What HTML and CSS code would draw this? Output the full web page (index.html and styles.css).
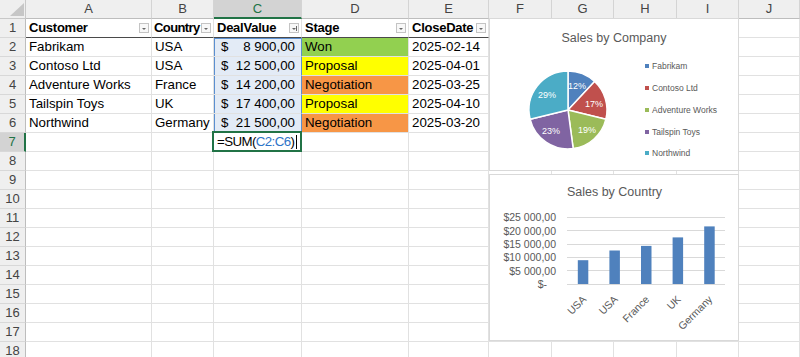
FILE: index.html
```html
<!DOCTYPE html>
<html>
<head>
<meta charset="utf-8">
<link rel="stylesheet" href="styles.css">
</head>
<body>
<div class="sheet">
  <div class="corner"><svg width="26" height="19" viewBox="0 0 26 19"><polygon points="10,16 24,16 24,3" fill="#c6c6c6"/></svg></div>
  <div class="ch">A</div><div class="ch">B</div><div class="ch sel-col">C</div><div class="ch">D</div><div class="ch">E</div><div class="ch">F</div><div class="ch">G</div><div class="ch">H</div><div class="ch">I</div><div class="ch">J</div>

  <div class="rh">1</div>
  <div class="c th"><span class="tt">Customer</span><span class="fb"></span></div>
  <div class="c th"><span class="tt tight">Country</span><span class="fb"></span></div>
  <div class="c th"><span class="tt">DealValue</span><span class="fb fb-sort"></span></div>
  <div class="c th"><span class="tt">Stage</span><span class="fb"></span></div>
  <div class="c th"><span class="tt">CloseDate</span><span class="fb"></span></div>
  <div class="c"></div><div class="c"></div><div class="c"></div><div class="c"></div><div class="c"></div>

  <div class="rh">2</div>
  <div class="c">Fabrikam</div><div class="c">USA</div>
  <div class="c num rng rng-top"><span>$</span><span>8 900,00</span></div>
  <div class="c won">Won</div><div class="c">2025-02-14</div>
  <div class="c"></div><div class="c"></div><div class="c"></div><div class="c"></div><div class="c"></div>

  <div class="rh">3</div>
  <div class="c">Contoso Ltd</div><div class="c">USA</div>
  <div class="c num rng"><span>$</span><span>12 500,00</span></div>
  <div class="c prop">Proposal</div><div class="c">2025-04-01</div>
  <div class="c"></div><div class="c"></div><div class="c"></div><div class="c"></div><div class="c"></div>

  <div class="rh">4</div>
  <div class="c">Adventure Works</div><div class="c">France</div>
  <div class="c num rng"><span>$</span><span>14 200,00</span></div>
  <div class="c neg">Negotiation</div><div class="c">2025-03-25</div>
  <div class="c"></div><div class="c"></div><div class="c"></div><div class="c"></div><div class="c"></div>

  <div class="rh">5</div>
  <div class="c">Tailspin Toys</div><div class="c">UK</div>
  <div class="c num rng"><span>$</span><span>17 400,00</span></div>
  <div class="c prop">Proposal</div><div class="c">2025-04-10</div>
  <div class="c"></div><div class="c"></div><div class="c"></div><div class="c"></div><div class="c"></div>

  <div class="rh">6</div>
  <div class="c">Northwind</div><div class="c">Germany</div>
  <div class="c num rng rng-bot"><span>$</span><span>21 500,00</span></div>
  <div class="c neg">Negotiation</div><div class="c">2025-03-20</div>
  <div class="c"></div><div class="c"></div><div class="c"></div><div class="c"></div><div class="c"></div>

  <div class="rh sel-row">7</div>
  <div class="c"></div><div class="c"></div>
  <div class="c active"><span class="fx">=SUM(<span class="ref">C2:C6</span>)</span><span class="caret"></span></div>
  <div class="c"></div><div class="c"></div>
  <div class="c"></div><div class="c"></div><div class="c"></div><div class="c"></div><div class="c"></div>

  <div class="rh">8</div><div class="c"></div><div class="c"></div><div class="c"></div><div class="c"></div><div class="c"></div><div class="c"></div><div class="c"></div><div class="c"></div><div class="c"></div><div class="c"></div>
  <div class="rh">9</div><div class="c"></div><div class="c"></div><div class="c"></div><div class="c"></div><div class="c"></div><div class="c"></div><div class="c"></div><div class="c"></div><div class="c"></div><div class="c"></div>
  <div class="rh">10</div><div class="c"></div><div class="c"></div><div class="c"></div><div class="c"></div><div class="c"></div><div class="c"></div><div class="c"></div><div class="c"></div><div class="c"></div><div class="c"></div>
  <div class="rh">11</div><div class="c"></div><div class="c"></div><div class="c"></div><div class="c"></div><div class="c"></div><div class="c"></div><div class="c"></div><div class="c"></div><div class="c"></div><div class="c"></div>
  <div class="rh">12</div><div class="c"></div><div class="c"></div><div class="c"></div><div class="c"></div><div class="c"></div><div class="c"></div><div class="c"></div><div class="c"></div><div class="c"></div><div class="c"></div>
  <div class="rh">13</div><div class="c"></div><div class="c"></div><div class="c"></div><div class="c"></div><div class="c"></div><div class="c"></div><div class="c"></div><div class="c"></div><div class="c"></div><div class="c"></div>
  <div class="rh">14</div><div class="c"></div><div class="c"></div><div class="c"></div><div class="c"></div><div class="c"></div><div class="c"></div><div class="c"></div><div class="c"></div><div class="c"></div><div class="c"></div>
  <div class="rh">15</div><div class="c"></div><div class="c"></div><div class="c"></div><div class="c"></div><div class="c"></div><div class="c"></div><div class="c"></div><div class="c"></div><div class="c"></div><div class="c"></div>
  <div class="rh">16</div><div class="c"></div><div class="c"></div><div class="c"></div><div class="c"></div><div class="c"></div><div class="c"></div><div class="c"></div><div class="c"></div><div class="c"></div><div class="c"></div>
  <div class="rh">17</div><div class="c"></div><div class="c"></div><div class="c"></div><div class="c"></div><div class="c"></div><div class="c"></div><div class="c"></div><div class="c"></div><div class="c"></div><div class="c"></div>
  <div class="rh">18</div><div class="c"></div><div class="c"></div><div class="c"></div><div class="c"></div><div class="c"></div><div class="c"></div><div class="c"></div><div class="c"></div><div class="c"></div><div class="c"></div>

  <div class="chart chart-pie">
    <svg width="250" height="153" viewBox="489 18 250 153">
      <rect x="489.5" y="18.5" width="249" height="152" fill="#fff" stroke="#d9d9d9"/>
      <text class="ctitle" x="614" y="42" text-anchor="middle">Sales by Company</text>
      <g stroke="#fff" stroke-width="1.5" stroke-linejoin="round">
        <path d="M568,110 L568,71 A39,39 0 0,1 594.6,81.5 Z" fill="#4f81bd"/>
        <path d="M568,110 L594.6,81.5 A39,39 0 0,1 605.9,119.2 Z" fill="#c0504d"/>
        <path d="M568,110 L605.9,119.2 A39,39 0 0,1 573.2,148.6 Z" fill="#9bbb59"/>
        <path d="M568,110 L573.2,148.6 A39,39 0 0,1 530.1,119.2 Z" fill="#8064a2"/>
        <path d="M568,110 L530.1,119.2 A39,39 0 0,1 568,71 Z" fill="#4bacc6"/>
      </g>
      <g class="plabel" text-anchor="middle">
        <text x="577" y="88.5">12%</text>
        <text x="594" y="106.5">17%</text>
        <text x="587" y="132.5">19%</text>
        <text x="551" y="133.5">23%</text>
        <text x="547" y="97.5">29%</text>
      </g>
      <g class="legend">
        <rect x="645" y="64" width="4" height="4" fill="#4f81bd"/><text x="652" y="69">Fabrikam</text>
        <rect x="645" y="86" width="4" height="4" fill="#c0504d"/><text x="652" y="91">Contoso Ltd</text>
        <rect x="645" y="108" width="4" height="4" fill="#9bbb59"/><text x="652" y="113">Adventure Works</text>
        <rect x="645" y="130" width="4" height="4" fill="#8064a2"/><text x="652" y="135">Tailspin Toys</text>
        <rect x="645" y="151" width="4" height="4" fill="#4bacc6"/><text x="652" y="156">Northwind</text>
      </g>
    </svg>
  </div>

  <div class="chart chart-bar">
    <svg width="250" height="167" viewBox="489 174 250 167">
      <rect x="489.5" y="174.5" width="249" height="166" fill="#fff" stroke="#d9d9d9"/>
      <text class="ctitle" x="614.5" y="196" text-anchor="middle">Sales by Country</text>
      <g stroke="#d9d9d9" stroke-width="1">
        <line x1="567" y1="217.5" x2="725" y2="217.5"/>
        <line x1="567" y1="230.5" x2="725" y2="230.5"/>
        <line x1="567" y1="244.5" x2="725" y2="244.5"/>
        <line x1="567" y1="257.5" x2="725" y2="257.5"/>
        <line x1="567" y1="270.5" x2="725" y2="270.5"/>
        <line x1="567" y1="284.5" x2="725" y2="284.5"/>
      </g>
      <g class="axis" text-anchor="end">
        <text x="556" y="221">$25 000,00</text>
        <text x="556" y="234.5">$20 000,00</text>
        <text x="556" y="248">$15 000,00</text>
        <text x="556" y="261">$10 000,00</text>
        <text x="556" y="274.5">$5 000,00</text>
        <text x="547" y="288">$-</text>
      </g>
      <g fill="#4f81bd">
        <rect x="577.8" y="260.2" width="10.5" height="23.8"/>
        <rect x="609.4" y="250.5" width="10.5" height="33.5"/>
        <rect x="641" y="245.9" width="10.5" height="38.1"/>
        <rect x="672.6" y="237.4" width="10.5" height="46.6"/>
        <rect x="704.2" y="226.4" width="10.5" height="57.6"/>
      </g>
      <g class="axis" text-anchor="end">
        <text x="587" y="300" transform="rotate(-45 587 300)">USA</text>
        <text x="618.5" y="300" transform="rotate(-45 618.5 300)">USA</text>
        <text x="650" y="300" transform="rotate(-45 650 300)">France</text>
        <text x="681.5" y="300" transform="rotate(-45 681.5 300)">UK</text>
        <text x="713" y="300" transform="rotate(-45 713 300)">Germany</text>
      </g>
    </svg>
  </div>
</div>
</body>
</html>
```

FILE: styles.css
```css
html, body {
  margin: 0;
  padding: 0;
  background: #fff;
  overflow: hidden;
}

.sheet {
  position: relative;
  display: grid;
  grid-template-columns: 26px 126px 62px 88px 107px 80px 63px 62px 63px 62px 61px;
  grid-auto-rows: 19px;
  width: 800px;
  height: 357px;
  overflow: hidden;
  font-family: "Liberation Sans", Arial, sans-serif;
  font-size: 13.3px;
  color: #000;
}

.corner {
  background: #efefef;
  border-right: 1px solid #c8c8c8;
  border-bottom: 1px solid #c8c8c8;
  box-sizing: border-box;
}
.corner svg { display: block; }

.ch {
  box-sizing: border-box;
  background: #efefef;
  border-right: 1px solid #d4d4d4;
  border-bottom: 1px solid #bdbdbd;
  color: #444;
  font-size: 13px;
  text-align: center;
  line-height: 18px;
}
.ch.sel-col {
  background: #d3d3d3;
  color: #217346;
  border-bottom: 2px solid #217346;
  line-height: 17px;
}

.rh {
  box-sizing: border-box;
  background: #efefef;
  border-right: 1px solid #bdbdbd;
  border-bottom: 1px solid #d8d8d8;
  color: #444;
  font-size: 13px;
  text-align: center;
  line-height: 18px;
}
.rh.sel-row {
  background: #d3d3d3;
  color: #217346;
  border-right: 2px solid #217346;
}

.c {
  box-sizing: border-box;
  border-right: 1px solid #e1e1e1;
  border-bottom: 1px solid #e1e1e1;
  line-height: 18px;
  padding: 0 3px;
  white-space: nowrap;
  overflow: hidden;
}

.th {
  display: flex;
  align-items: center;
  justify-content: space-between;
  font-weight: bold;
  font-size: 13px;
  letter-spacing: -0.25px;
  padding: 0 2px 0 3px;
  border-bottom: 1px solid #4a4a4a;
}
.tt {
  overflow: visible;
  min-width: 0;
}
.tt.tight {
  letter-spacing: -0.6px;
  margin-left: -1px;
}
.fb {
  flex: none;
  position: relative;
  width: 10px;
  height: 10px;
  box-sizing: border-box;
  border: 1px solid #c4c4c4;
  background: #f8f8f8;
  margin-left: 1px;
}
.fb::after {
  content: "";
  position: absolute;
  left: 2px;
  top: 4px;
  border-left: 2px solid transparent;
  border-right: 2px solid transparent;
  border-top: 2px solid #666;
}
.fb-sort::before {
  content: "";
  position: absolute;
  right: 1px;
  top: 2px;
  width: 1px;
  height: 5px;
  background: #666;
}

.num {
  display: flex;
  justify-content: space-between;
  padding: 0 6px 0 7px;
}
.rng {
  background: #e3ebf6;
  box-shadow: inset 1px 0 0 #5b8fd0;
  border-right-color: #5b8fd0;
}
.rng-top { box-shadow: inset 1px 0 0 #5b8fd0, inset 0 1px 0 #5b8fd0; }
.rng-bot { border-bottom-color: #5b8fd0; }

.won { background: #92d050; }
.prop { background: #ffff00; }
.neg { background: #f79646; }

.active {
  position: relative;
  overflow: visible;
  display: flex;
  align-items: center;
  padding-left: 3px;
  z-index: 2;
}
.active::after {
  content: "";
  position: absolute;
  left: -2px;
  top: -2px;
  right: -1px;
  bottom: -1px;
  border: 2px solid #217346;
}
.fx {
  letter-spacing: -0.6px;
}
.ref { color: #2e74c8; }
.caret {
  display: inline-block;
  width: 1px;
  height: 14px;
  background: #000;
  margin-left: 2px;
}

.chart {
  position: absolute;
  left: 489px;
  width: 250px;
  background: #fff;
  z-index: 3;
}
.chart svg { display: block; }
.chart-pie { top: 18px; height: 153px; }
.chart-bar { top: 174px; height: 167px; }

.ctitle {
  font-family: "Liberation Sans", Arial, sans-serif;
  font-size: 12.5px;
  fill: #595959;
}
.plabel {
  font-family: "Liberation Sans", Arial, sans-serif;
  font-size: 9px;
  fill: #fff;
}
.legend {
  font-family: "Liberation Sans", Arial, sans-serif;
  font-size: 8.5px;
  fill: #595959;
}
.axis {
  font-family: "Liberation Sans", Arial, sans-serif;
  font-size: 10.5px;
  fill: #595959;
}
```
